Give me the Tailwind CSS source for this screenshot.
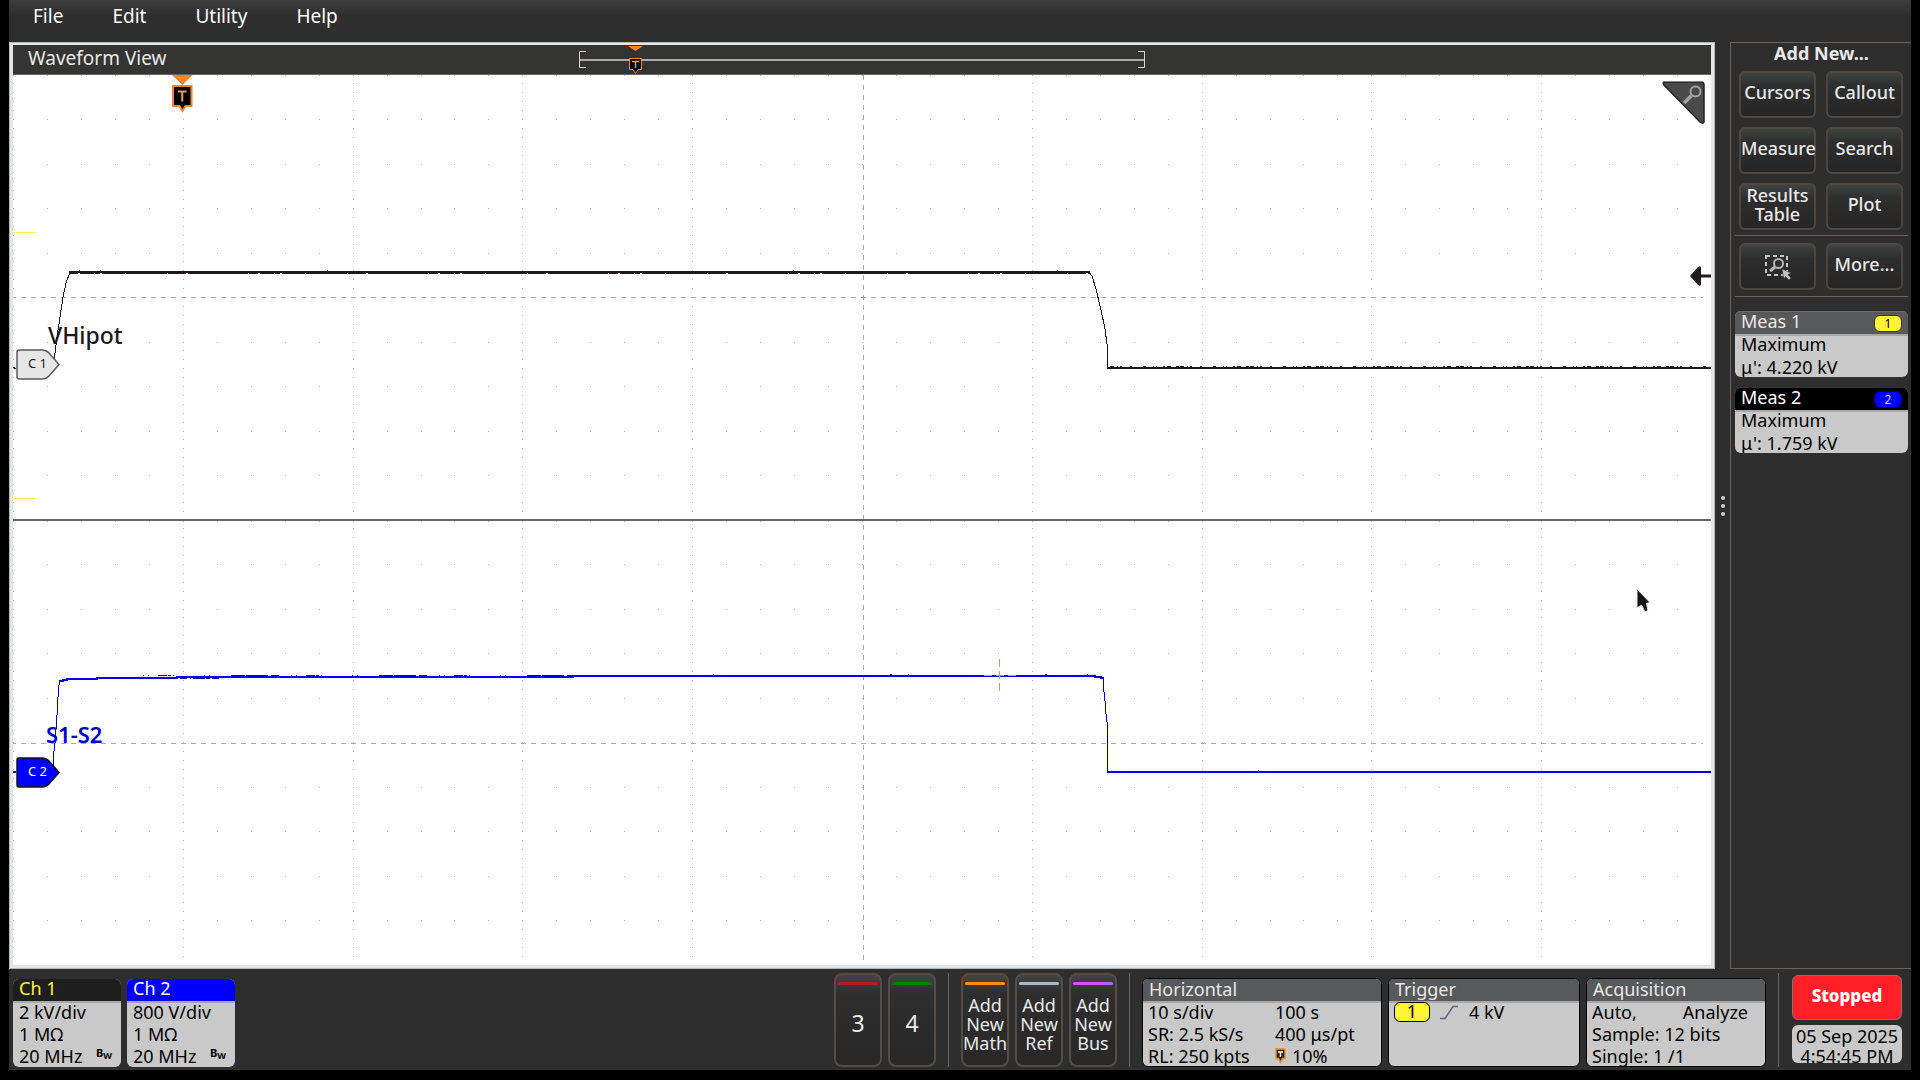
<!DOCTYPE html>
<html lang="en">
<head>
    <meta charset="UTF-8">
    <meta name="viewport" content="width=device-width, initial-scale=1.0">
    <title>Waveform View</title>
    <script src="https://cdn.jsdelivr.net/npm/@tailwindcss/browser@4"></script>
</head>
<body class="bg-black h-screen px-[9px] pb-[10px] font-['Noto_Sans','Open_Sans',sans-serif] text-lg text-[#e8e8e8] overflow-hidden">
    <div class="h-full flex flex-col bg-[#2e2e2e]">

        <!-- Menu bar -->
        <nav class="h-[42px] shrink-0 flex items-start gap-[49px] pl-[24px] pt-[2px] bg-linear-to-b from-[#3d3d3d] to-[#2e2e2e] to-40% text-white text-[19px] leading-[28px]">
            <a href="#">File</a>
            <a href="#">Edit</a>
            <a href="#">Utility</a>
            <a href="#">Help</a>
        </nav>

        <div class="flex-1 min-h-0 flex">
            <!-- Waveform view -->
            <main class="flex-1 min-w-0 flex flex-col border border-[#b4b6b8]">
                <div class="flex-1 min-h-0 flex flex-col border-x-3 border-t-2 border-b-3 border-[#e5e6e8]">
                    <div class="h-[30px] shrink-0 relative bg-[#343432] border-b border-[#666]">
                        <h1 class="pl-[15px] text-[19px] leading-[27px]">Waveform View</h1>
                        <svg class="absolute left-1/3 top-0 w-[568px] h-[29px]" viewBox="0 0 568 29" fill="none">
                            <path d="M1 15h564" stroke="#aeaaaa" stroke-width="2"/>
                            <path d="M7 6.500H.5V22.500H7M559 6.500H565.500V22.500H559" stroke="#d8d8d8"/>
                            <path d="M49 1h15l-7.500 5z" fill="#f7861c"/>
                            <path d="M50.500 13.500h12v11h-3.500l-2.500 4l-2.500-4h-3.500z" fill="#000" stroke="#f7861c"/>
                            <path d="M53 16.500h7M56.500 16v7" stroke="#f09a50" stroke-width="1.500"/>
                        </svg>
                    </div>
                    <div class="flex-1 min-h-0 relative bg-white">
                        <svg class="absolute inset-0 w-full h-full" viewBox="0 0 1698 890" preserveAspectRatio="none" fill="none" shape-rendering="crispEdges">
                            <path id="dots" stroke="#b4b4b4"/>
                            <path d="M850.500 0V890" stroke="#aaa" stroke-dasharray="5 5"/>
                            <path d="M-2 222.500H1690M-2 668.500H1690" stroke="#aaa" stroke-dasharray="5 5"/>
                            <path d="M0 445H1698" stroke="#666" stroke-width="2"/>
                            <path d="M0 157.500H23M0 423.500H23" stroke="#fff04a"/>

                            <!-- channel 1 -->
                            <path d="M0 292.500h1v1h2M41 286L44 262L47 242L50 222L53 208L57 197" stroke="#1c1819"/>
                            <path d="M56 197H1077" stroke="#1c1819" stroke-width="2"/>
                            <path d="M56 198.500H1077" stroke="#1c1819" stroke-dasharray="9 2 14 1 5 2 23 1 41 1 18 2 60 1"/>
                            <path d="M66 195.500h1M87 195.500h1M314 195.500h1M780 195.500h1M1044 195.500h1" stroke="#1c1819"/>
                            <path d="M1076 197L1079 201L1083 214L1088 235L1092 254L1094 269V293" stroke="#1c1819"/>
                            <path d="M1094 293H1698" stroke="#1c1819" stroke-width="2"/>
                            <path d="M1097 291.500H1698" stroke="#1c1819" stroke-dasharray="4 3 1 2 2 8 2 11 3 7 1 2 1 6 2 2 4 5 3 1"/>

                            <!-- channel 2 -->
                            <path d="M0 697h3" stroke="#0000f0" stroke-width="2"/>
                            <path d="M40 691V684L41 676L42 668L44 640L45 622L46 610L47 605" stroke="#0000c8"/>
                            <path d="M47 606h3v-1h4v-1h30v-1h80v-1H560v-1H1082v1h6v1h3" stroke="#0000f0" stroke-width="2"/>
                            <path d="M130 600.500H560" stroke="#0000b0" stroke-dasharray="1 4 1 9 9 1 3 2 1 30 1 4 1 21 14 1 22 3 8 12"/>
                            <path d="M700 599.500h1M877 599.500h2M895 599.500h1M1032 599.500h2M1074 599.500h1M1245 695.500h1" stroke="#0000b0"/>
                            <path d="M148 603.500h60" stroke="#0000b0" stroke-dasharray="12 1 4 2 7 3 1 2"/>
                            <path d="M1090.500 602V613L1092.500 630L1093.500 647" stroke="#0000f0"/>
                            <path d="M1094.500 647V698" stroke="#00006a"/>
                            <path d="M1094 697H1698" stroke="#0000f0" stroke-width="2"/>

                            <path d="M971 600.500h8M983 600.500h8M995 600.500h8M986.500 584v8M986.500 596v8M986.500 608v8" stroke="#f09a38"/>
                        </svg>

                        <svg class="absolute left-[159px] top-0 w-[21px] h-[39px]" viewBox="0 0 21 39" fill="none">
                            <path d="M0 0h20.500L10.500 10z" fill="#f7861c"/>
                            <path d="M1 11h18.500v20h-6L10.500 36l-3-5H1z" fill="#000" stroke="#f7861c" stroke-width="2"/>
                            <path d="M6 16.500h8.500M10.250 16v10.500" stroke="#ee9a55" stroke-width="2"/>
                        </svg>

                        <span class="absolute left-[35px] top-[244px] text-[23px] leading-[32px] font-medium text-[#1c1819]">VHipot</span>
                        <span class="absolute left-[33px] top-[643px] text-[22px] leading-[32px] font-semibold text-[#0000d0]">S1-S2</span>

                        <div class="absolute left-[3px] top-[274px] w-[44px] h-[31px] pl-[12px] text-[13px] leading-[29px] text-[#1c1819]">
                            <svg class="absolute inset-0" width="44" height="31" viewBox="0 0 44 31"><path d="M3 1H26Q30 1 33 4L43 15.500L33 27Q30 30 26 30H3Q1 30 1 28V3Q1 1 3 1Z" fill="#e6e6e6" stroke="#5a5a5a" stroke-width="1.500"/></svg>
                            <span class="relative">C 1</span>
                        </div>
                        <div class="absolute left-[3px] top-[682px] w-[44px] h-[31px] pl-[12px] text-[13px] leading-[29px] text-white">
                            <svg class="absolute inset-0" width="44" height="31" viewBox="0 0 44 31"><path d="M3 1H26Q30 1 33 4L43 15.500L33 27Q30 30 26 30H3Q1 30 1 28V3Q1 1 3 1Z" fill="#0000ff" stroke="#101030" stroke-width="1.500"/></svg>
                            <span class="relative">C 2</span>
                        </div>

                        <button aria-label="Zoom" class="absolute right-[5px] top-[5px]">
                            <svg width="44" height="45" viewBox="0 0 44 45" fill="none">
                                <path d="M3 2H39Q42 2 42 5V42Q41 44.500 38 42L2 5Q0 2 3 2Z" fill="#4a4a4a" stroke="#222" stroke-width="1.500"/>
                                <path d="M3 1.500H40" stroke="#888"/>
                                <circle cx="33.500" cy="11.500" r="5" stroke="#a2a2a2" stroke-width="2"/>
                                <path d="M29.500 15.500L22 23" stroke="#a2a2a2" stroke-width="3.500"/>
                            </svg>
                        </button>
                        <svg class="absolute right-0 top-[190px]" width="22" height="22" viewBox="0 0 22 22" fill="#231c1e"><path d="M1 11L9 2Q12 0 12 3V9.500H22V12.500H12V19Q12 22 9 20Z"/></svg>
                        <svg class="absolute right-[58px] top-[513px]" width="18" height="26" viewBox="0 0 18 26"><path d="M2 1V20L6.500 17L10 24L13 22.500L11.500 15.500L15 14.500Z" fill="#151515" stroke="#e4e4e4"/></svg>
                    </div>
                </div>
            </main>

            <!-- Splitter -->
            <div class="w-[15px] shrink-0 flex flex-col items-center justify-center gap-[4px]">
                <i class="size-1 rounded-full bg-[#cfcfcf]"></i>
                <i class="size-1 rounded-full bg-[#cfcfcf]"></i>
                <i class="size-1 rounded-full bg-[#cfcfcf]"></i>
            </div>

            <!-- Results bar -->
            <aside class="w-[181px] shrink-0 border-l border-y border-[#6a645f] pl-[4px] pr-[3px]">
                <h2 class="text-center font-bold leading-[21px]">Add New...</h2>
                <div class="grid grid-cols-2 gap-x-[10px] gap-y-[9px] pl-[4px] pr-[5px] pt-[7px] pb-[5px] leading-[19px] font-medium">
                    <button class="h-[47px] pb-[4px] rounded-md border-2 border-[#4d4743] bg-linear-to-b from-[#414343] via-[#2e2e2e] via-30% to-[#262626]">Cursors</button>
                    <button class="h-[47px] pb-[4px] rounded-md border-2 border-[#4d4743] bg-linear-to-b from-[#414343] via-[#2e2e2e] via-30% to-[#262626]">Callout</button>
                    <button class="h-[47px] pb-[4px] rounded-md border-2 border-[#4d4743] bg-linear-to-b from-[#414343] via-[#2e2e2e] via-30% to-[#262626]">Measure</button>
                    <button class="h-[47px] pb-[4px] rounded-md border-2 border-[#4d4743] bg-linear-to-b from-[#414343] via-[#2e2e2e] via-30% to-[#262626]">Search</button>
                    <button class="h-[47px] pb-[4px] rounded-md border-2 border-[#4d4743] bg-linear-to-b from-[#414343] via-[#2e2e2e] via-30% to-[#262626]">Results<br>Table</button>
                    <button class="h-[47px] pb-[4px] rounded-md border-2 border-[#4d4743] bg-linear-to-b from-[#414343] via-[#2e2e2e] via-30% to-[#262626]">Plot</button>
                </div>
                <div class="grid grid-cols-2 gap-x-[10px] pl-[4px] pr-[5px] pt-[7px] pb-[6px] border-y border-[#6a645f] leading-[19px] font-medium">
                    <button aria-label="Draw a box" class="h-[47px] rounded-md border-2 border-[#4d4743] bg-linear-to-b from-[#414343] via-[#2e2e2e] via-30% to-[#262626] flex items-center justify-center">
                        <svg width="28" height="26" viewBox="0 0 28 26" fill="none">
                            <path d="M2 2H23V21H2Z" stroke="#c4c4c4" stroke-width="2" stroke-dasharray="4 3"/>
                            <circle cx="14.500" cy="9.500" r="4.500" stroke="#b4b4b4" stroke-width="2"/>
                            <path d="M11 13L6 17" stroke="#b4b4b4" stroke-width="3"/>
                            <path d="M18 15L27 19L24 20.500L27 24L25 26L21.500 22.500L20 25Z" fill="#c4c4c4" stroke="#2e2e2e" stroke-width=".5"/>
                        </svg>
                    </button>
                    <button class="h-[47px] pb-[4px] rounded-md border-2 border-[#4d4743] bg-linear-to-b from-[#414343] via-[#2e2e2e] via-30% to-[#262626]">More...</button>
                </div>

                <section class="mt-[14px] rounded-md overflow-hidden bg-[#c9c9c9] text-black leading-[22px]">
                    <h3 class="h-[23px] px-[6px] flex justify-between bg-[#58595b] text-[#e8e8e8] border-t border-[#6a6a6a] leading-[18px]">Meas 1
                        <span class="mt-[3px] w-[28px] h-[17px] rounded-md border border-[#3a3a20] bg-[#fff335] text-black text-xs leading-[16px] text-center">1</span>
                    </h3>
                    <div class="h-[43px] px-[6px] border-t-2 border-[#a8a8a8]">
                        <p class="h-[20px] leading-[17px]">Maximum</p>
                        <p>μ': 4.220 kV</p>
                    </div>
                </section>
                <section class="mt-[10px] rounded-md overflow-hidden bg-[#c9c9c9] text-black leading-[22px]">
                    <h3 class="h-[23px] px-[6px] flex justify-between bg-black text-white border-t border-[#333] leading-[18px]">Meas 2
                        <span class="mt-[3px] w-[28px] h-[17px] rounded-md border border-[#000060] bg-[#0000ff] text-[#d0d0ff] text-xs leading-[16px] text-center">2</span>
                    </h3>
                    <div class="h-[43px] px-[6px] border-t-2 border-[#a8a8a8]">
                        <p class="h-[20px] leading-[17px]">Maximum</p>
                        <p>μ': 1.759 kV</p>
                    </div>
                </section>
            </aside>
        </div>

        <!-- Settings bar -->
        <footer class="h-[101px] shrink-0 flex items-end pl-[4px] pr-[9px] pb-[3px]">
            <section class="w-[108px] h-[88px] rounded-md overflow-hidden bg-[#c9c9c9] text-black leading-[22px] mr-[6px]">
                <h3 class="h-[22px] px-[6px] bg-[#1e1e1e] text-[#fff335] leading-[19px]">Ch 1</h3>
                <div class="px-[6px] shadow-[inset_0_2px_#a8a8a8]">
                    <p>2 kV/div</p>
                    <p>1 MΩ</p>
                    <p class="flex justify-between pr-[3px]">20 MHz <b class="text-[11px] leading-[15px]">B<sub class="text-[9px]">W</sub></b></p>
                </div>
            </section>
            <section class="w-[108px] h-[88px] rounded-md overflow-hidden bg-[#c9c9c9] text-black leading-[22px]">
                <h3 class="h-[22px] px-[6px] bg-[#0000ff] text-white leading-[19px]">Ch 2</h3>
                <div class="px-[6px] shadow-[inset_0_2px_#a8a8a8]">
                    <p>800 V/div</p>
                    <p>1 MΩ</p>
                    <p class="flex justify-between pr-[3px]">20 MHz <b class="text-[11px] leading-[15px]">B<sub class="text-[9px]">W</sub></b></p>
                </div>
            </section>

            <div class="ml-auto mr-[6px] flex gap-[6px] leading-[19px]">
                <button class="w-[48px] h-[94px] rounded-lg border-2 border-[#544d49] bg-linear-to-b from-[#434545] via-[#2e2e2e] via-20% to-[#282828] flex flex-col items-center pt-[7px] text-[23px]"><i class="w-[40px] h-[3px] rounded-sm bg-[#a32222]"></i><span class="pt-[29px]">3</span></button>
                <button class="w-[48px] h-[94px] rounded-lg border-2 border-[#544d49] bg-linear-to-b from-[#434545] via-[#2e2e2e] via-20% to-[#282828] flex flex-col items-center pt-[7px] text-[23px]"><i class="w-[40px] h-[3px] rounded-sm bg-[#008000]"></i><span class="pt-[29px]">4</span></button>
                <div class="w-px mx-[6px] bg-[#6a645f]"></div>
                <button class="w-[48px] h-[94px] rounded-lg border-2 border-[#544d49] bg-linear-to-b from-[#434545] via-[#2e2e2e] via-20% to-[#282828] flex flex-col items-center pt-[7px]"><i class="w-[40px] h-[3px] rounded-sm bg-[#f28f22]"></i><span class="pt-[11px]">Add<br>New<br>Math</span></button>
                <button class="w-[48px] h-[94px] rounded-lg border-2 border-[#544d49] bg-linear-to-b from-[#434545] via-[#2e2e2e] via-20% to-[#282828] flex flex-col items-center pt-[7px]"><i class="w-[40px] h-[3px] rounded-sm bg-[#b0b4c8]"></i><span class="pt-[11px]">Add<br>New<br>Ref</span></button>
                <button class="w-[48px] h-[94px] rounded-lg border-2 border-[#544d49] bg-linear-to-b from-[#434545] via-[#2e2e2e] via-20% to-[#282828] flex flex-col items-center pt-[7px]"><i class="w-[40px] h-[3px] rounded-sm bg-[#c060f0]"></i><span class="pt-[11px]">Add<br>New<br>Bus</span></button>
                <div class="w-px mx-[6px] bg-[#6a645f]"></div>
            </div>

            <section class="w-[240px] h-[89px] rounded-md overflow-hidden border border-black bg-[#c9c9c9] text-black leading-[22px] mr-[6px]">
                <h3 class="h-[22px] px-[6px] bg-[#58595b] text-[#e8e8e8] leading-[20px]">Horizontal</h3>
                <div class="px-[5px] grid grid-cols-[127px_1fr] shadow-[inset_0_2px_#a8a8a8]">
                    <p>10 s/div</p><p>100 s</p>
                    <p>SR: 2.5 kS/s</p><p>400 μs/pt</p>
                    <p>RL: 250 kpts</p>
                    <p class="flex items-center gap-[6px]">
                        <svg width="11" height="16" viewBox="0 0 11 16"><path d="M1 1h9v9.500H7.500L5.500 14.500L3.500 10.500H1z" fill="#222" stroke="#f28f22" stroke-width="1.500"/><path d="M3 4h5M5.500 4v5" stroke="#fff" stroke-width="1.500"/></svg>10%
                    </p>
                </div>
            </section>
            <section class="w-[192px] h-[89px] rounded-md overflow-hidden border border-black bg-[#c9c9c9] text-black leading-[22px] mr-[6px]">
                <h3 class="h-[22px] px-[6px] bg-[#58595b] text-[#e8e8e8] leading-[20px]">Trigger</h3>
                <div class="px-[5px] flex shadow-[inset_0_2px_#a8a8a8]">
                    <span class="mt-px w-[36px] h-[20px] rounded-md border border-black bg-[#fff335] text-center leading-[17px]">1</span>
                    <svg class="ml-[9px] mt-[4px]" width="20" height="15" viewBox="0 0 20 15" fill="none"><path d="M1 13.500H6L14 1.500H19" stroke="#66608e" stroke-width="1.500"/></svg>
                    <span class="ml-[10px]">4 kV</span>
                </div>
            </section>
            <section class="w-[180px] h-[89px] rounded-md overflow-hidden border border-black bg-[#c9c9c9] text-black leading-[22px]">
                <h3 class="h-[22px] px-[6px] bg-[#58595b] text-[#e8e8e8] leading-[20px]">Acquisition</h3>
                <div class="px-[5px] shadow-[inset_0_2px_#a8a8a8]">
                    <p class="flex justify-between pr-[12px]"><span>Auto,</span><span>Analyze</span></p>
                    <p>Sample: 12 bits</p>
                    <p>Single: 1 /1</p>
                </div>
            </section>

            <div class="w-px h-[94px] ml-[12px] mr-[13px] bg-[#6a645f]"></div>
            <div class="w-[110px] flex flex-col gap-[5px] pb-[4px]">
                <button class="h-[45px] rounded-md border border-[#777] bg-[#ff2027] text-white font-extrabold text-[17px] leading-[20px] pb-[3px]">Stopped</button>
                <p class="h-[38px] rounded-md bg-[#c9c9c9] text-black text-center leading-[20px] overflow-hidden pt-px">05 Sep 2025<br>4:54:45 PM</p>
            </div>
        </footer>
    </div>

    <script>
        // graticule: a dot every 1/5 division on both axes
        let d = "";
        for (let row = 0; row < 20; row++) {
            if (row === 5 || row === 15) continue;
            let y = Math.floor(row * 44.5) + (row === 10 ? 1.5 : 0.5);
            for (let i = 0; i < 50; i++) d += `M${Math.round(i * 33.96)} ${y}h1`;
        }
        for (let col = 0; col < 10; col++) {
            if (col === 5) continue;
            for (let i = 0; i < 100; i++) d += `M${Math.round(col * 169.8)} ${Math.floor(i * 8.9) + 0.5}h1`;
        }
        document.getElementById("dots").setAttribute("d", d);
    </script>
</body>
</html>
